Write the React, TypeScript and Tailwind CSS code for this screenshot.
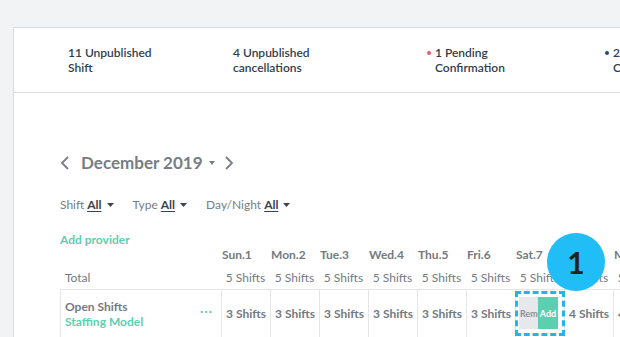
import React from "react";

const days = ["Sun.1", "Mon.2", "Tue.3", "Wed.4", "Thu.5", "Fri.6", "Sat.7", "Sun.8", "Mon.9"];
const body = ["3 Shifts", "3 Shifts", "3 Shifts", "3 Shifts", "3 Shifts", "3 Shifts", "", "4 Shifts", "4 Shifts"];

function Caret() {
  return (
    <svg width="7" height="4" viewBox="0 0 7 4" className="block">
      <polygon points="0,0 7,0 3.5,4" fill="#3d4650" />
    </svg>
  );
}

export default function App() {
  return (
    <div className="relative w-[620px] h-[337px] overflow-hidden bg-[#f2f3f5] font-['Lato',sans-serif]">
      <div className="ml-[13px] mt-[27px] h-[310px] bg-white border-l border-t border-[#d9dcdf]">
        {/* header */}
        <div className="h-[65px] border-b border-[#d9dcdf] flex items-center pl-[54px] text-[12px] leading-[15px] font-semibold text-[#2f3e4e] whitespace-nowrap">
          <div className="w-[165px] shrink-0">
            11 Unpublished
            <br />
            Shift
          </div>
          <div className="w-[194px] shrink-0">
            4 Unpublished
            <br />
            cancellations
          </div>
          <div className="w-[178px] shrink-0 flex items-start">
            <span className="w-[4px] h-[4px] rounded-full bg-[#e55a63] mt-[6px] mr-[4px] shrink-0" />
            <span>
              1 Pending
              <br />
              Confirmation
            </span>
          </div>
          <div className="shrink-0 flex items-start">
            <span className="w-[4px] h-[4px] rounded-full bg-[#1f4d86] mt-[6px] mr-[4px] shrink-0" />
            <span>
              2 Pending
              <br />
              Confirmation
            </span>
          </div>
        </div>

        {/* content */}
        <div className="pl-[46px] pt-[58px]">
          <div className="flex items-center h-[24px] text-[#767d85]">
            <svg width="10" height="14" viewBox="0 0 10 14" className="block">
              <polyline points="8,1 2,7 8,13" fill="none" stroke="#767d85" strokeWidth="1.8" />
            </svg>
            <span className="ml-[11px] text-[17px] font-bold leading-[24px]">December 2019</span>
            <span className="ml-[6px]">
              <svg width="6" height="4" viewBox="0 0 6 4" className="block">
                <polygon points="0,0 6,0 3,4" fill="#767d85" />
              </svg>
            </span>
            <svg width="10" height="14" viewBox="0 0 10 14" className="block ml-[9px]">
              <polyline points="2,1 8,7 2,13" fill="none" stroke="#767d85" strokeWidth="1.8" />
            </svg>
          </div>

          <div className="mt-[22px] flex items-center h-[16px] text-[12px] leading-[16px] text-[#767d85] gap-[19px]">
            {["Shift", "Type", "Day/Night"].map((l) => (
              <div key={l} className="flex items-center">
                <span>{l}</span>
                <span className="ml-[3px] font-bold text-[#3a4450] underline underline-offset-2">All</span>
                <span className="ml-[5px]">
                  <Caret />
                </span>
              </div>
            ))}
          </div>

          <div className="mt-[19px] h-[15px] text-[12px] leading-[16px] font-bold text-[#5bcfaf]">Add provider</div>

          {/* table */}
          <div className="flex h-[23px] text-[12px] leading-[16px] font-bold text-[#737a82] whitespace-nowrap">
            <div className="w-[161px] shrink-0" />
            {days.map((d) => (
              <div key={d} className="w-[49px] shrink-0 pl-[1px]">
                {d}
              </div>
            ))}
          </div>
          <div className="flex h-[19px] text-[12px] leading-[16px] text-[#737a82] whitespace-nowrap">
            <div className="w-[161px] shrink-0 pl-[5px]">Total</div>
            {days.map((d) => (
              <div key={d} className="w-[49px] shrink-0 text-center">
                5 Shifts
              </div>
            ))}
          </div>
          <div className="flex h-[48px] border-t border-[#e3e5e8] text-[12px] leading-[15px] whitespace-nowrap">
            <div className="w-[161px] shrink-0 border-l border-[#e3e5e8] pl-[4px] pr-[8px] flex items-center justify-between">
              <div className="font-bold">
                <div className="text-[#737a82]">Open Shifts</div>
                <div className="text-[#5bcfaf]">Staffing Model</div>
              </div>
              <span className="text-[#5bcfaf] font-bold tracking-[1px] mt-[-6px]">···</span>
            </div>
            {body.map((b, i) =>
              i === 6 ? (
                <div key={i} className="relative w-[49px] shrink-0 border-l border-[#e3e5e8] flex items-center">
                  <div className="absolute left-[-1px] top-[1px] w-[50px] h-[45px] border-[3px] border-dashed border-[#1eb6ef]" />
                  <div className="ml-[3px] flex h-[32px] mt-[-1px] text-[9px] font-bold overflow-hidden">
                    <div className="w-[19px] bg-[#e6e8eb] text-[#8a9098] flex items-center pl-[1px] overflow-hidden">Remove</div>
                    <div className="w-[20px] bg-[#5ccfb1] text-white flex items-center justify-center">Add</div>
                  </div>
                </div>
              ) : (
                <div key={i} className="w-[49px] shrink-0 border-l border-[#e3e5e8] flex items-center justify-center font-bold text-[#737a82]">
                  {b}
                </div>
              )
            )}
          </div>
        </div>
      </div>

      {/* badge */}
      <div className="absolute left-[547px] top-[233px] w-[58px] h-[58px] rounded-full bg-[#20bdf6] flex items-center justify-center text-[30px] font-bold text-[#222] leading-none">
        1
      </div>
    </div>
  );
}
